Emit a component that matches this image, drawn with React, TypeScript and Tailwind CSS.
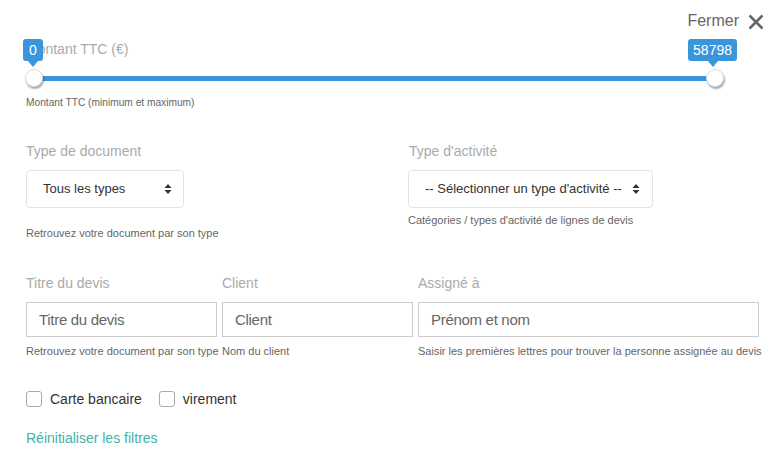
import React, { useState } from 'react';

const BLUE = 'bg-[#3a96dc]';

const Bubble: React.FC<{ value: string; className: string }> = ({ value, className }) => (
  <div className={`absolute ${className} flex flex-col items-center`}>
    <div className={`${BLUE} text-white text-[14px] leading-[22px] px-[5px] rounded-[3px] min-w-[20px] text-center`}>
      {value}
    </div>
    <div className="w-0 h-0 border-l-[5px] border-r-[5px] border-t-[6px] border-l-transparent border-r-transparent border-t-[#3a96dc]" />
  </div>
);

const Handle: React.FC<{ className: string }> = ({ className }) => (
  <div
    className={`absolute ${className} top-[-7px] w-[18px] h-[18px] rounded-full bg-white border border-[#ddd] shadow-[1px_2px_2px_rgba(0,0,0,0.35)]`}
  />
);

const Caret = () => (
  <svg width="8" height="12" viewBox="0 0 8 12" className="shrink-0">
    <path d="M4 1 L7.5 5 H0.5 Z" fill="#333" />
    <path d="M4 11 L7.5 7 H0.5 Z" fill="#333" />
  </svg>
);

const Checkbox: React.FC<{ label: string; checked: boolean; onChange: () => void }> = ({ label, checked, onChange }) => (
  <label className="flex items-center cursor-pointer" onClick={onChange}>
    <span className="w-[16px] h-[16px] rounded-[3px] border border-[#aaa] bg-white flex items-center justify-center">
      {checked && <span className="w-[8px] h-[8px] bg-[#3a96dc] rounded-[1px]" />}
    </span>
    <span className="ml-[8px] text-[14px] leading-[18px] text-[#333]">{label}</span>
  </label>
);

const inputCls =
  'mt-[10px] w-full h-[35px] border border-[#ccc] px-[12px] text-[15px] tracking-[-0.3px] text-[#333] placeholder:text-[#666] outline-none';

export default function App() {
  const [carte, setCarte] = useState(false);
  const [virement, setVirement] = useState(false);

  return (
    <div className="w-[780px] h-[471px] bg-white flex flex-col font-['Liberation_Sans',Arial,sans-serif] overflow-hidden">
      {/* Close */}
      <div className="h-[40px] flex justify-end items-start pt-[11px] pr-[16px]">
        <span className="text-[16px] leading-[20px] text-[#666]">Fermer</span>
        <svg width="16" height="16" viewBox="0 0 16 16" className="ml-[9px] mt-[3px]">
          <path d="M1.5 1.5 L14.5 14.5 M14.5 1.5 L1.5 14.5" stroke="#666" strokeWidth="2.6" />
        </svg>
      </div>

      {/* Amount slider */}
      <div className="relative">
        <div className="pl-[26px] text-[14px] leading-[18px] text-[#aaa]">Montant TTC (€)</div>
        <div className={`relative ml-[34px] mt-[18px] w-[681px] h-[5px] ${BLUE}`}>
          <Handle className="left-[-9px]" />
          <Handle className="right-[-9px]" />
          <Bubble value="0" className="left-[-11px] bottom-[14px]" />
          <Bubble value="58798" className="right-[-22px] bottom-[14px]" />
        </div>
        <div className="pl-[26px] mt-[15px] text-[10.2px] leading-[13px] text-[#666]">
          Montant TTC (minimum et maximum)
        </div>
      </div>

      {/* Type selects */}
      <div className="flex mt-[33px] pl-[26px]">
        <div className="w-[382px]">
          <div className="text-[14px] leading-[18px] text-[#aaa]">Type de document</div>
          <div className="mt-[10px] w-[158px] h-[38px] border border-[#e3e3e3] rounded-[4px] flex items-center justify-between pl-[16px] pr-[11px]">
            <span className="text-[13px] text-[#333] whitespace-nowrap">Tous les types</span>
            <Caret />
          </div>
          <div className="mt-[19px] text-[11px] leading-[13px] text-[#666]">
            Retrouvez votre document par son type
          </div>
        </div>
        <div>
          <div className="pl-[1px] text-[14px] leading-[18px] text-[#aaa]">Type d'activité</div>
          <div className="mt-[10px] w-[245px] h-[38px] border border-[#e3e3e3] rounded-[4px] flex items-center justify-between pl-[16px] pr-[12px]">
            <span className="text-[13px] text-[#333] whitespace-nowrap">-- Sélectionner un type d'activité --</span>
            <Caret />
          </div>
          <div className="mt-[6px] text-[11px] leading-[13px] text-[#666]">
            Catégories / types d'activité de lignes de devis
          </div>
        </div>
      </div>

      {/* Text inputs */}
      <div className="flex gap-[5px] mt-[34px] pl-[26px]">
        <div className="w-[191px]">
          <div className="text-[14px] leading-[18px] text-[#aaa]">Titre du devis</div>
          <input placeholder="Titre du devis" className={inputCls} />
          <div className="mt-[8px] text-[11px] leading-[13px] text-[#666] whitespace-nowrap">
            Retrouvez votre document par son type
          </div>
        </div>
        <div className="w-[191px]">
          <div className="text-[14px] leading-[18px] text-[#aaa]">Client</div>
          <input placeholder="Client" className={inputCls} />
          <div className="mt-[8px] text-[11px] leading-[13px] text-[#666]">Nom du client</div>
        </div>
        <div className="w-[341px]">
          <div className="text-[14px] leading-[18px] text-[#aaa]">Assigné à</div>
          <input placeholder="Prénom et nom" className={inputCls} />
          <div className="mt-[8px] text-[11px] leading-[13px] text-[#666] whitespace-nowrap">
            Saisir les premières lettres pour trouver la personne assignée au devis
          </div>
        </div>
      </div>

      {/* Payment checkboxes */}
      <div className="flex items-center gap-[17px] mt-[32px] pl-[26px]">
        <Checkbox label="Carte bancaire" checked={carte} onChange={() => setCarte(!carte)} />
        <Checkbox label="virement" checked={virement} onChange={() => setVirement(!virement)} />
      </div>

      <div className="mt-[18px] pl-[26px]">
        <a href="#" className="text-[14px] leading-[18px] text-[#3fb3a8]">Réinitialiser les filtres</a>
      </div>
    </div>
  );
}
